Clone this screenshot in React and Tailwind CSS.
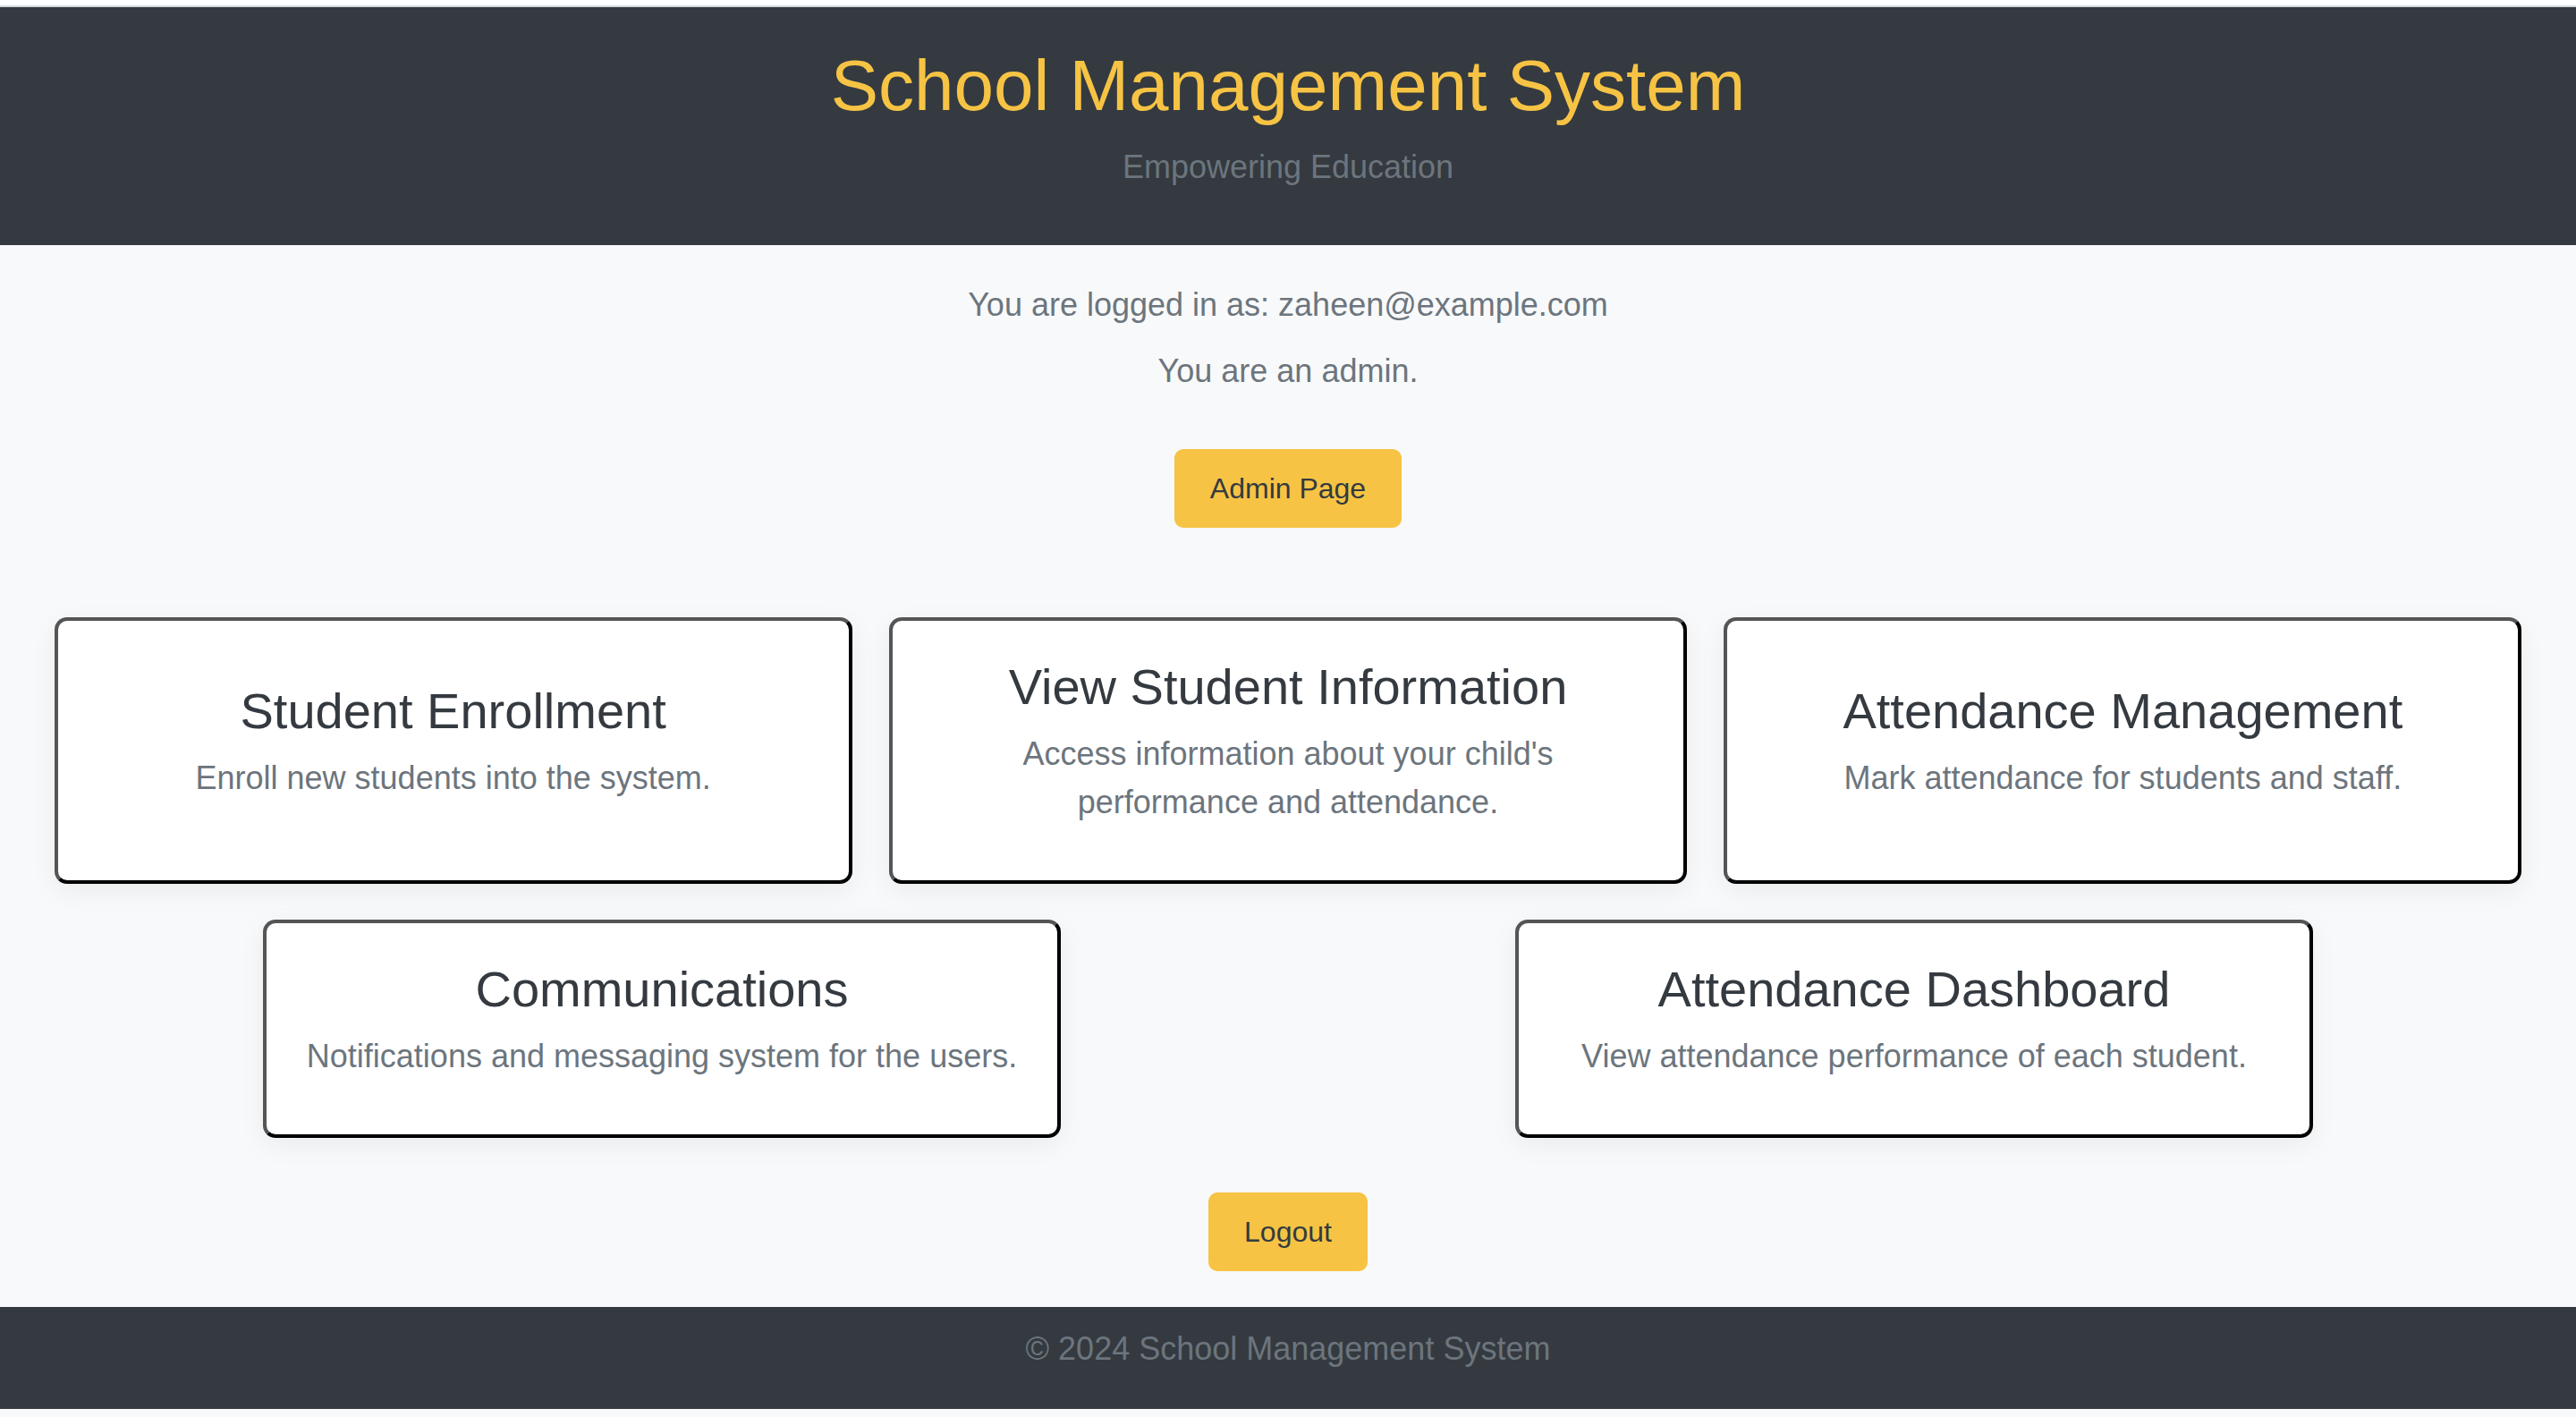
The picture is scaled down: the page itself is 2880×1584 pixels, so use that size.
import React from "react";

const cards = [
  { title: "Student Enrollment", lines: ["Enroll new students into the system."] },
  { title: "View Student Information", lines: ["Access information about your child's", "performance and attendance."] },
  { title: "Attendance Management", lines: ["Mark attendance for students and staff."] },
  { title: "Communications", lines: ["Notifications and messaging system for the users."] },
  { title: "Attendance Dashboard", lines: ["View attendance performance of each student."] },
];

const App = () => {
  return (
    <div
      className="min-h-screen flex flex-col bg-[#f8f9fa] text-[#343a40]"
      style={{ fontFamily: '"Liberation Sans", Arial, Helvetica, sans-serif' }}
    >
      {/* window top edge */}
      <div className="h-[6px] bg-white" />
      <div className="h-[2px] bg-[#d8dbdb]" />

      {/* Header */}
      <header className="h-[266px] bg-[#343a40] flex flex-col items-center">
        <h1 className="mt-[40px] text-[80px] leading-[96px] text-[#f6c344]">
          School Management System
        </h1>
        <p className="mt-[16px] text-[36px] leading-[54px] text-[#6c757d]">Empowering Education</p>
      </header>

      {/* Main */}
      <main className="flex flex-col items-center pt-[40px]">
        <p className="text-[36px] leading-[54px] text-[#6c757d]">
          You are logged in as: zaheen@example.com
        </p>
        <p className="mt-[20px] text-[36px] leading-[54px] text-[#6c757d]">You are an admin.</p>

        <button className="mt-[60px] h-[88px] px-[40px] rounded-[10px] bg-[#f6c344] text-[32px] leading-[48px] text-[#343a40]">
          Admin Page
        </button>

        {/* Cards */}
        <div className="mt-[80px] w-full px-[40px] flex flex-wrap justify-around">
          {cards.map((card, index) => (
            <div
              key={index}
              className="m-[20px] w-[892px] flex flex-col justify-center items-center text-center bg-white rounded-[14px] border-[4px] border-[#555] border-r-black border-b-black px-[30px] py-[40px] shadow-[0_8px_30px_rgba(0,0,0,0.06)]"
            >
              <h3 className="text-[56px] leading-[67px] text-[#343a40]">{card.title}</h3>
              <p className="mt-[15px] mb-[20px] text-[36px] leading-[54px] text-[#6c757d]">
                {card.lines.map((line, i) => (
                  <span key={i} className="block whitespace-nowrap">
                    {line}
                  </span>
                ))}
              </p>
            </div>
          ))}
        </div>

        <button className="mt-[41px] h-[88px] px-[40px] rounded-[10px] bg-[#f6c344] text-[32px] leading-[48px] text-[#343a40]">
          Logout
        </button>
      </main>

      {/* Footer */}
      <footer className="mt-[40px] h-[114px] bg-[#343a40] flex justify-center pt-[20px]">
        <p className="text-[36px] leading-[54px] text-[#6c757d]">© 2024 School Management System</p>
      </footer>
      <div className="h-[8px] bg-[#f8f9fa]" />
    </div>
  );
};

export default App;
